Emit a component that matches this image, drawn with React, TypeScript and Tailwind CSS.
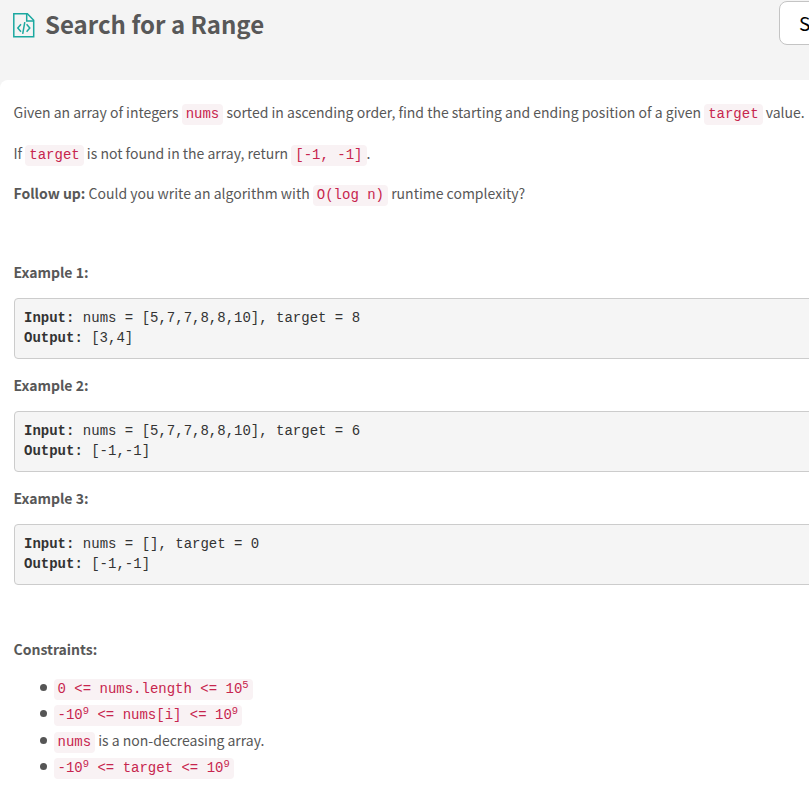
import type { ReactNode } from "react";

function Code({ children }: { children: ReactNode }) {
  return (
    <code className="rounded bg-[#f9f2f4] px-1 pt-[2px] pb-[3px] font-['Liberation_Mono',monospace] text-[14px] leading-none text-[#c7254e]">
      {children}
    </code>
  );
}

function Sup({ children }: { children: ReactNode }) {
  return <sup className="relative -top-[5px] align-baseline text-[10.5px] leading-none">{children}</sup>;
}

function Example({ n, input, output }: { n: number; input: string; output: string }) {
  return (
    <section className="h-[113px]">
      <p className="h-[37px] font-bold">Example {n}:</p>
      <pre className="-mr-4 h-[61px] rounded border border-[#cccccc] bg-[#f5f5f5] px-[9.5px] py-[8.5px] font-['Liberation_Mono',monospace] text-[14px] leading-[20px] text-[#333333]">
        <b>Input:</b> {input}
        {"\n"}
        <b>Output:</b> {output}
      </pre>
    </section>
  );
}

function Item({ children }: { children: ReactNode }) {
  return (
    <li className="flex h-[26px] items-start nth-2:h-[27px]">
      <span className="mt-2 mr-[7px] size-[7px] shrink-0 rounded-full bg-[#555555]" />
      <span>{children}</span>
    </li>
  );
}

export default function App() {
  return (
    <div className="h-[787px] w-[809px] overflow-hidden bg-[#f4f4f4] font-['Noto_Sans_CJK_SC',sans-serif] text-[#585858]">
      <header className="flex h-20 items-start">
        <svg className="mt-[13px] ml-[13px] h-[25px] w-[22px] shrink-0" viewBox="0 0 22 25" fill="none" stroke="#1ba8a0" strokeWidth="1.5">
          <path d="M.8.8h13.6l6.3 6.5v16.4H.8Z" />
          <path d="M13.7.8v7.1h7" />
          <path d="m8 11.2-3.2 3.8 3.2 3.8M13.6 11.2l3.2 3.8-3.2 3.8M11.8 9.2 9.7 20.8" />
        </svg>
        <h1 className="ml-[10px] pt-[6px] text-[24px] leading-[36px] font-bold whitespace-nowrap">Search for a Range</h1>
        <button className="mt-px -mr-12 ml-auto h-11 w-[78px] shrink-0 rounded-lg border border-[#c4c4c4] bg-white pl-[19px] text-left text-[19px] text-black">
          S
        </button>
      </header>
      <main className="h-[707px] rounded-tl-lg bg-white pt-[21px] pl-[13.5px] text-[14px] leading-[22px] whitespace-nowrap">
        <p className="h-[41px]">
          Given an array of integers <Code>nums</Code> sorted in ascending order, find the starting and ending position of a given <Code>target</Code> value.
        </p>
        <p className="h-10">
          If <Code>target</Code> is not found in the array, return <Code>[-1, -1]</Code>.
        </p>
        <p className="h-[79px]">
          <b>Follow up:</b> Could you write an algorithm with <Code>O(log n)</Code> runtime complexity?
        </p>
        <Example n={1} input="nums = [5,7,7,8,8,10], target = 8" output="[3,4]" />
        <Example n={2} input="nums = [5,7,7,8,8,10], target = 6" output="[-1,-1]" />
        <Example n={3} input="nums = [], target = 0" output="[-1,-1]" />
        <p className="mt-[38px] h-[38px] font-bold">Constraints:</p>
        <ul className="pl-[26px]">
          <Item><Code>0 &lt;= nums.length &lt;= 10<Sup>5</Sup></Code></Item>
          <Item><Code>-10<Sup>9</Sup> &lt;= nums[i] &lt;= 10<Sup>9</Sup></Code></Item>
          <Item><Code>nums</Code> is a non-decreasing array.</Item>
          <Item><Code>-10<Sup>9</Sup> &lt;= target &lt;= 10<Sup>9</Sup></Code></Item>
        </ul>
      </main>
    </div>
  );
}
